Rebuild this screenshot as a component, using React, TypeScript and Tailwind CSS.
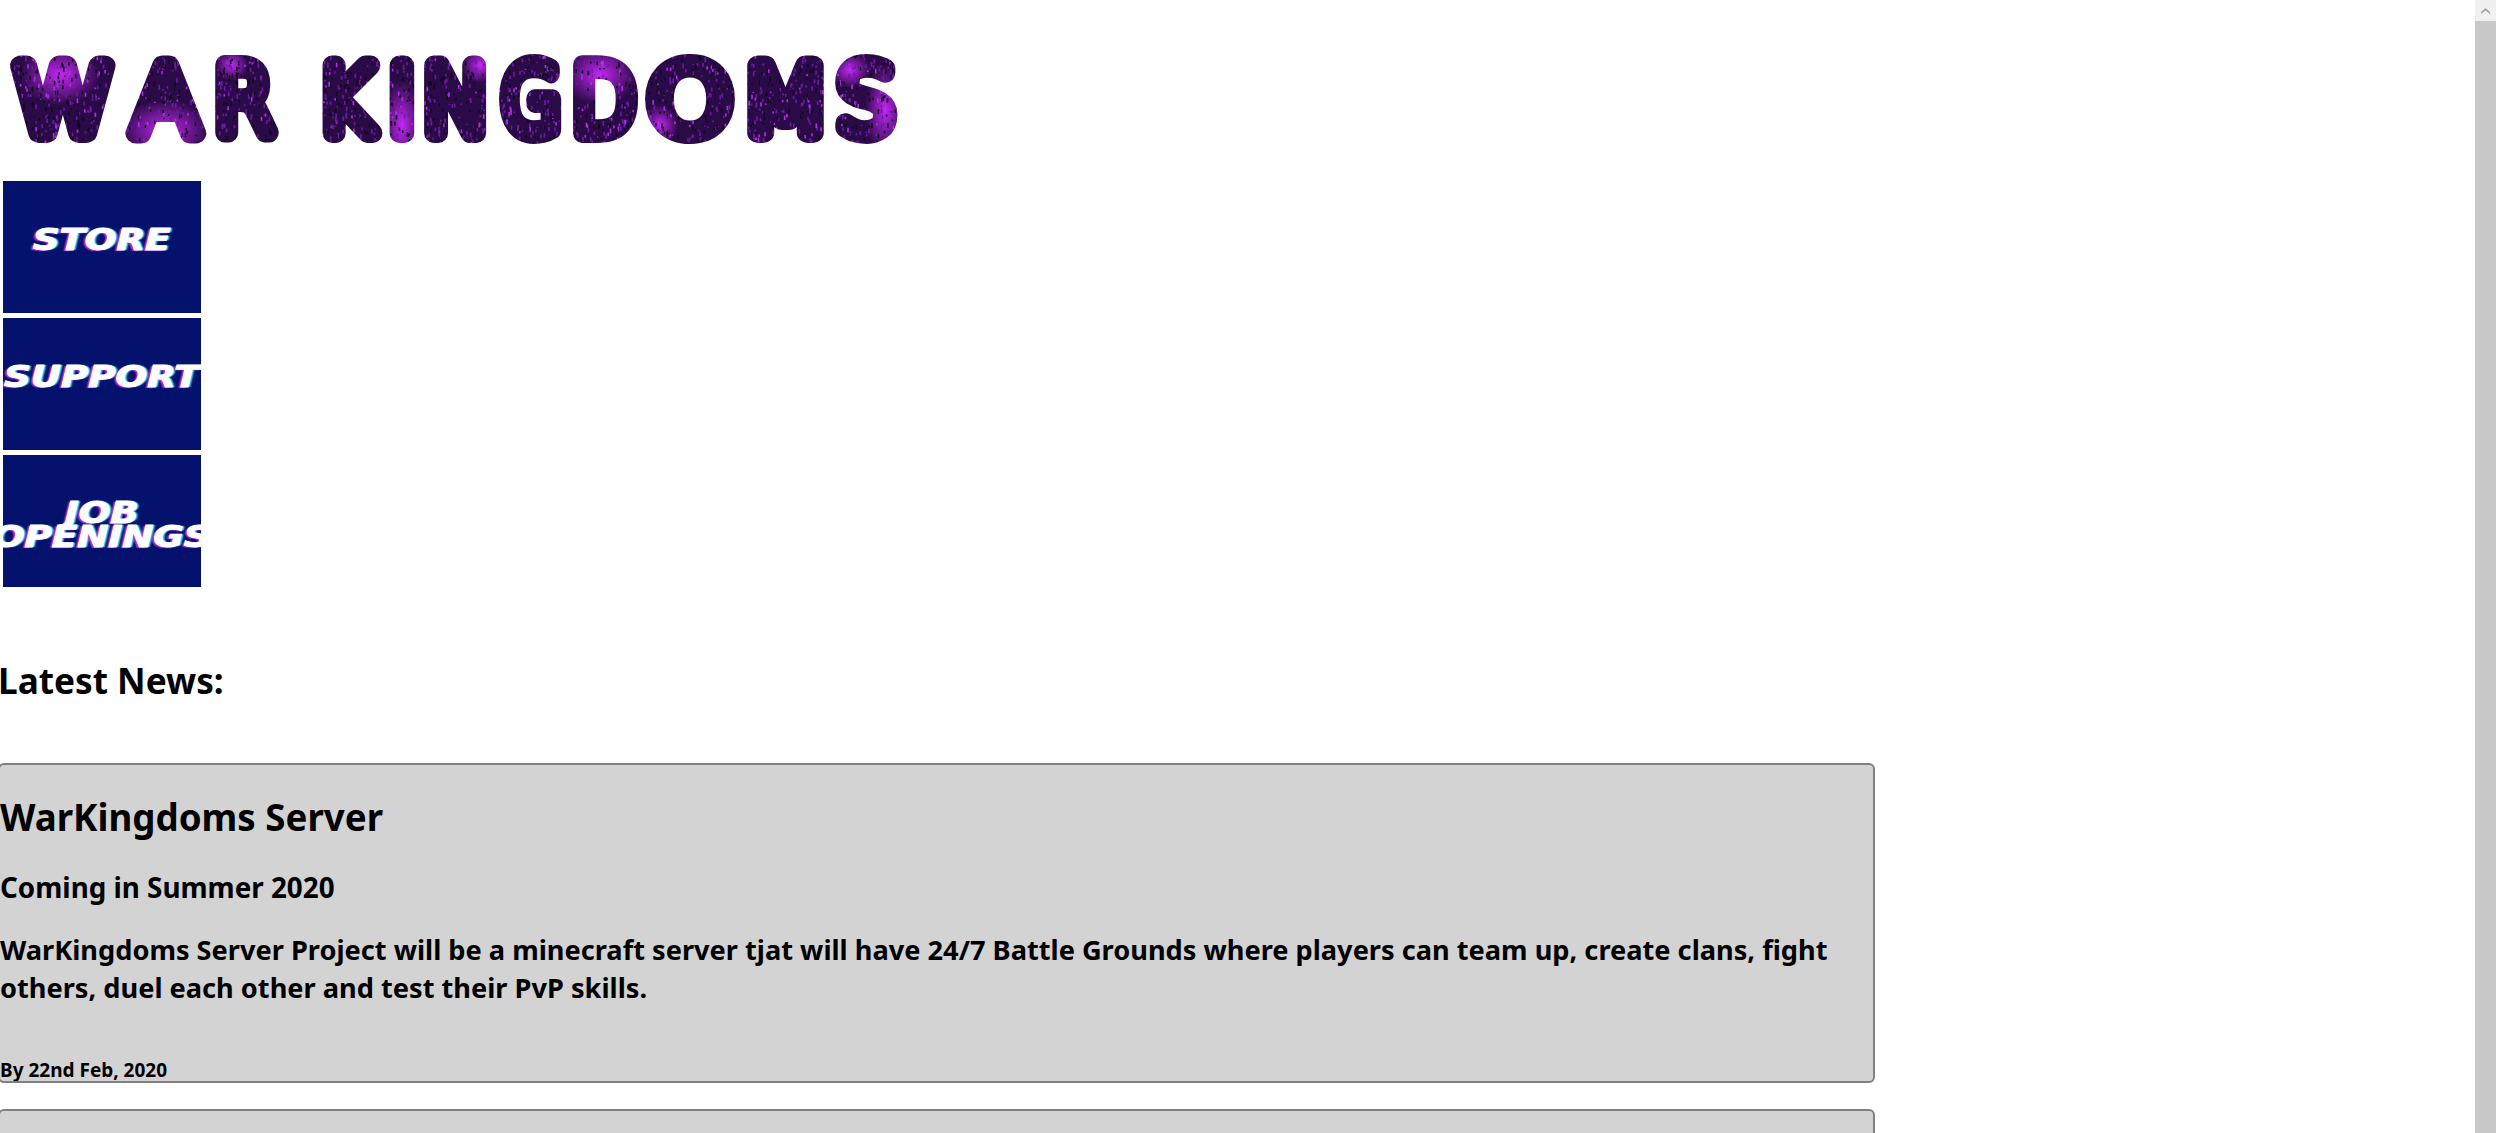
const letters = [
  { c: "W", x: 14, w: 100 },
  { c: "A", x: 133, w: 66 },
  { c: "R", x: 214, w: 60 },
  { c: "K", x: 317, w: 57 },
  { c: "I", x: 388.5, w: 27 },
  { c: "N", x: 423, w: 67 },
  { c: "G", x: 501, w: 60 },
  { c: "D", x: 572, w: 64 },
  { c: "O", x: 648, w: 84 },
  { c: "M", x: 742, w: 87 },
  { c: "S", x: 837, w: 58 },
];

const glows = [
  { x: 165, y: 130, rx: 45, ry: 30 },
  { x: 402, y: 125, rx: 20, ry: 45 },
  { x: 232, y: 65, rx: 16, ry: 16 },
  { x: 480, y: 65, rx: 18, ry: 18 },
  { x: 885, y: 110, rx: 20, ry: 45 },
  { x: 850, y: 70, rx: 20, ry: 18 },
  { x: 660, y: 125, rx: 18, ry: 20 },
  { x: 60, y: 75, rx: 40, ry: 30 },
  { x: 600, y: 75, rx: 36, ry: 30 },
];

function makeSpecks() {
  let seed = 42;
  const next = () => {
    seed = (seed * 16807) % 2147483647;
    return seed / 2147483647;
  };
  return Array.from({ length: 3400 }, () => ({
    x: next() * 920,
    y: 45 + next() * 105,
    h: 1 + next() * 4,
    color: next() > 0.85 ? "#b02fe8" : next() > 0.45 ? "#6a1aa5" : "#12041f",
  }));
}

const specks = makeSpecks();

function Logo() {
  return (
    <svg width="920" height="150" viewBox="0 0 920 150" className="block" role="img" aria-label="War Kingdoms">
      <defs>
        <radialGradient id="glow">
          <stop offset="0%" stopColor="#c427f5" />
          <stop offset="100%" stopColor="#c427f5" stopOpacity="0" />
        </radialGradient>
        <pattern id="space" patternUnits="userSpaceOnUse" width="920" height="150">
          <rect width="920" height="150" fill="#2b0b47" />
          {glows.map((g, i) => (
            <ellipse key={i} cx={g.x} cy={g.y} rx={g.rx} ry={g.ry} fill="url(#glow)" />
          ))}
          {specks.map((s, i) => (
            <rect key={i} x={s.x} y={s.y} width="1.6" height={s.h} fill={s.color} />
          ))}
        </pattern>
      </defs>
      {letters.map((l) => (
        <text
          key={l.c + l.x}
          x={l.x}
          y="133"
          textLength={l.w}
          lengthAdjust="spacingAndGlyphs"
          fontFamily="'DejaVu Sans', sans-serif"
          fontWeight="200"
          fontSize="92"
          fill="url(#space)"
          stroke="url(#space)"
          strokeWidth="20"
          strokeLinejoin="round"
          strokeLinecap="round"
        >
          {l.c}
        </text>
      ))}
    </svg>
  );
}

function NavButton({ lines, className }: { lines: string[]; className: string }) {
  return (
    <a className={`flex flex-col items-center justify-center w-[198px] h-[132px] bg-[#05126d] overflow-hidden ${className}`}>
      {lines.map((line) => (
        <span
          key={line}
          className="block whitespace-nowrap font-['DejaVu_Sans'] font-bold italic text-[30px] leading-[24px] text-white scale-x-[1.24] [-webkit-text-stroke:1px_white] [text-shadow:-2px_1px_1px_#c026d3,2px_0_1px_#22d3ee]"
        >
          {line}
        </span>
      ))}
    </a>
  );
}

function NewsCard() {
  return (
    <div className="w-[1877px] -ml-[2px] h-[320px] bg-[#d3d3d3] border-2 border-[#808080] rounded-[6px] overflow-hidden">
      <h1 className="mt-[27px] text-[36.7px] leading-[50px] font-bold">WarKingdoms Server</h1>
      <h2 className="mt-[26px] text-[27.8px] leading-[38px] font-bold">Coming in Summer 2020</h2>
      <p className="mt-[25px] text-[27.2px] leading-[38px] font-bold">
        WarKingdoms Server Project will be a minecraft server tjat will have 24/7 Battle Grounds where players can team up, create clans, fight others, duel each other and test their PvP skills.
      </p>
      <p className="mt-[51px] text-[19px] leading-[25px] font-bold">By 22nd Feb, 2020</p>
    </div>
  );
}

export default function App() {
  return (
    <div className="flex h-screen overflow-hidden bg-white text-black font-['Noto_Sans',sans-serif]">
      <main className="flex-1 min-w-0 overflow-hidden">
        <Logo />
        <nav className="flex flex-col gap-[5px] mt-[31px] ml-[3px]">
          <NavButton lines={["STORE"]} className="pb-[14px]" />
          <NavButton lines={["SUPPORT"]} className="pb-[14px]" />
          <NavButton lines={["JOB", "OPENINGS"]} className="pt-[8px]" />
        </nav>
        <h2 className="-ml-[2px] mt-[68px] text-[35.2px] leading-[50px] font-bold">Latest News:</h2>
        <div className="flex flex-col gap-[26px] mt-[58px]">
          <NewsCard />
          <NewsCard />
        </div>
      </main>
      <aside className="w-[21px] shrink-0 flex flex-col bg-[#c8c8c8]">
        <div className="flex items-center justify-center h-[21px] bg-[#f0f0f0]">
          <svg width="9" height="6" viewBox="0 0 9 6">
            <path d="M0 6 L0 4 L4.5 0 L9 4 L9 6 L4.5 2.5 Z" fill="#a3a3a3" />
          </svg>
        </div>
      </aside>
    </div>
  );
}
